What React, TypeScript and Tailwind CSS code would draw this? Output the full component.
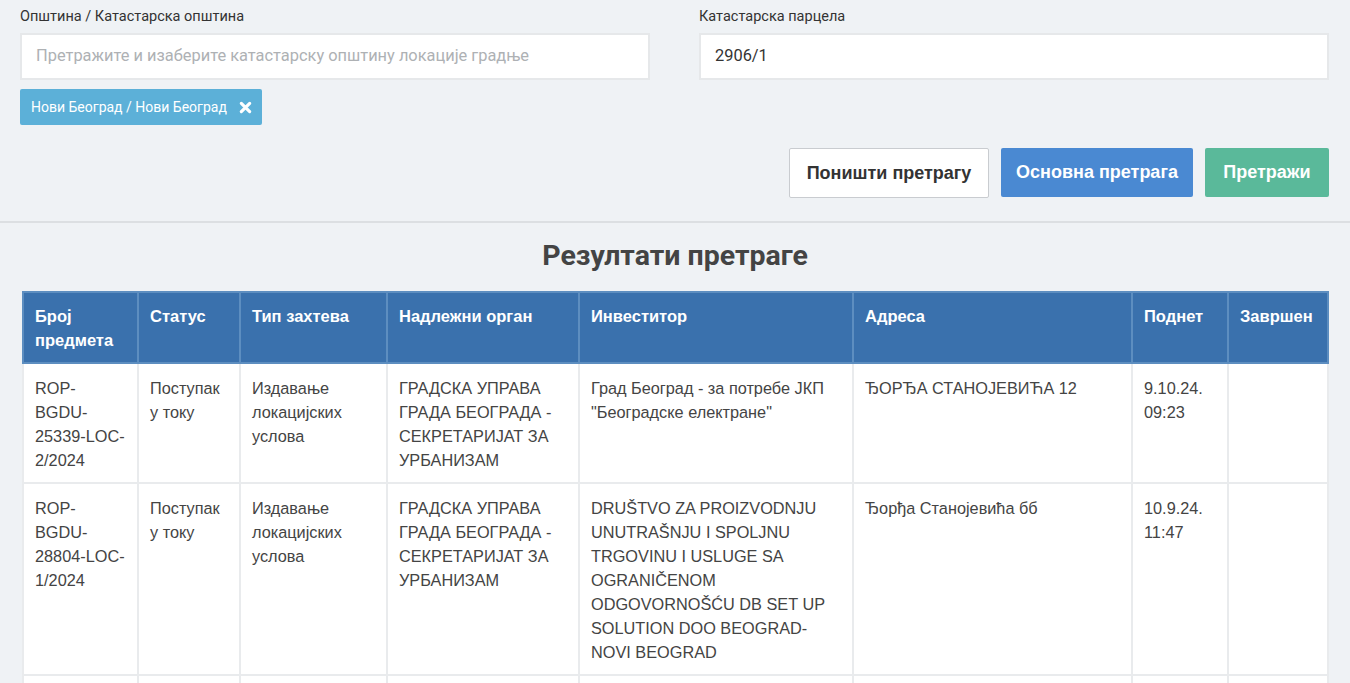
const rows = [
  {
    broj: "ROP-BGDU-25339-LOC-2/2024",
    status: "Поступак у току",
    tip: "Издавање локацијских услова",
    organ: "ГРАДСКА УПРАВА ГРАДА БЕОГРАДА - СЕКРЕТАРИЈАТ ЗА УРБАНИЗАМ",
    investitor: 'Град Београд - за потребе ЈКП "Београдске електране"',
    adresa: "ЂОРЂА СТАНОЈЕВИЋА 12",
    podnet: "9.10.24. 09:23",
    zavrsen: "",
  },
  {
    broj: "ROP-BGDU-28804-LOC-1/2024",
    status: "Поступак у току",
    tip: "Издавање локацијских услова",
    organ: "ГРАДСКА УПРАВА ГРАДА БЕОГРАДА - СЕКРЕТАРИЈАТ ЗА УРБАНИЗАМ",
    investitor:
      "DRUŠTVO ZA PROIZVODNJU UNUTRAŠNJU I SPOLJNU TRGOVINU I USLUGE SA OGRANIČENOM ODGOVORNOŠĆU DB SET UP SOLUTION DOO BEOGRAD-NOVI BEOGRAD",
    adresa: "Ђорђа Станојевића бб",
    podnet: "10.9.24. 11:47",
    zavrsen: "",
  },
  {
    broj: "",
    status: "",
    tip: "",
    organ: "",
    investitor: "",
    adresa: "",
    podnet: "",
    zavrsen: "",
  },
]

const columns = [
  { key: "broj", label: "Број предмета", width: "w-[115px]" },
  { key: "status", label: "Статус", width: "w-[102px]" },
  { key: "tip", label: "Тип захтева", width: "w-[147px]" },
  { key: "organ", label: "Надлежни орган", width: "w-[192px]" },
  { key: "investitor", label: "Инвеститор", width: "w-[274px]" },
  { key: "adresa", label: "Адреса", width: "w-[279px]" },
  { key: "podnet", label: "Поднет", width: "w-[96px]" },
  { key: "zavrsen", label: "Завршен", width: "w-[100px]" },
] as const

function CloseIcon() {
  return (
    <svg viewBox="0 0 14 14" className="h-[13px] w-[13px]" fill="none">
      <path
        d="M2.5 2.5 L11.5 11.5 M11.5 2.5 L2.5 11.5"
        stroke="white"
        strokeWidth="3.4"
        strokeLinecap="round"
      />
    </svg>
  )
}

export default function App() {
  return (
    <div className="h-[683px] overflow-hidden bg-[#eff2f5] font-['Roboto',sans-serif] text-[#333]">
      <section className="px-5 pt-[7px]">
        <div className="grid grid-cols-2 gap-[49px] pr-[1px]">
          <div>
            <label className="block text-[14.5px] leading-5">
              Општина / Катастарска општина
            </label>
            <div className="mt-[6px] flex h-[47px] items-center border-2 border-[#e6e8ea] bg-white px-[14px] text-[16.4px] text-[#aeb1b4]">
              Претражите и изаберите катастарску општину локације градње
            </div>
            <div className="mt-[9px] inline-flex h-[36px] items-center gap-[12px] rounded-[2px] bg-[#5cb0d8] pl-[11px] pr-[10px] text-[14px] text-white">
              <span>Нови Београд / Нови Београд</span>
              <CloseIcon />
            </div>
          </div>
          <div>
            <label className="block text-[14.5px] leading-5">
              Катастарска парцела
            </label>
            <div className="mt-[6px] flex h-[47px] items-center border-2 border-[#e6e8ea] bg-white px-[14px] text-[16.4px] text-[#333]">
              2906/1
            </div>
          </div>
        </div>

        <div className="mt-[23px] flex justify-end gap-[12px] pr-[1px] font-['Liberation_Sans',Arial,sans-serif]">
          <button className="h-[50px] w-[200px] rounded-[2px] border border-[#c9ccd0] bg-white text-[18px] font-bold text-[#333]">
            Поништи претрагу
          </button>
          <button className="h-[49px] w-[192px] rounded-[2px] bg-[#4a89d2] text-[18px] font-bold text-white">
            Основна претрага
          </button>
          <button className="h-[49px] w-[124px] rounded-[2px] bg-[#5ab99a] text-[18px] font-bold text-white">
            Претражи
          </button>
        </div>
      </section>

      <div className="mt-[23px] h-[2px] bg-[#dcdfe2]" />

      <h2 className="mt-[16px] text-center text-[28.5px] font-bold leading-[34px] text-[#444]">
        Резултати претраге
      </h2>

      <div className="mt-[18px] pl-[22px] pr-[23px]">
        <table className="w-[1305px] table-fixed border-collapse font-['Liberation_Sans',Arial,sans-serif] leading-6">
          <thead>
            <tr>
              {columns.map((col) => (
                <th
                  key={col.key}
                  className={`${col.width} border-2 border-[#5d8ec0] bg-[#3a71ad] px-[11px] pb-[10px] pt-[11px] text-left align-top text-[16.5px] font-bold text-white`}
                >
                  {col.label}
                </th>
              ))}
            </tr>
          </thead>
          <tbody>
            {rows.map((row, i) => (
              <tr key={i}>
                {columns.map((col) => (
                  <td
                    key={col.key}
                    className="h-[120px] border-2 border-[#e9ebed] bg-white px-[11px] pb-[10px] pt-[12px] align-top text-[16.3px] text-[#444]"
                  >
                    {row[col.key]}
                  </td>
                ))}
              </tr>
            ))}
          </tbody>
        </table>
      </div>
    </div>
  )
}
